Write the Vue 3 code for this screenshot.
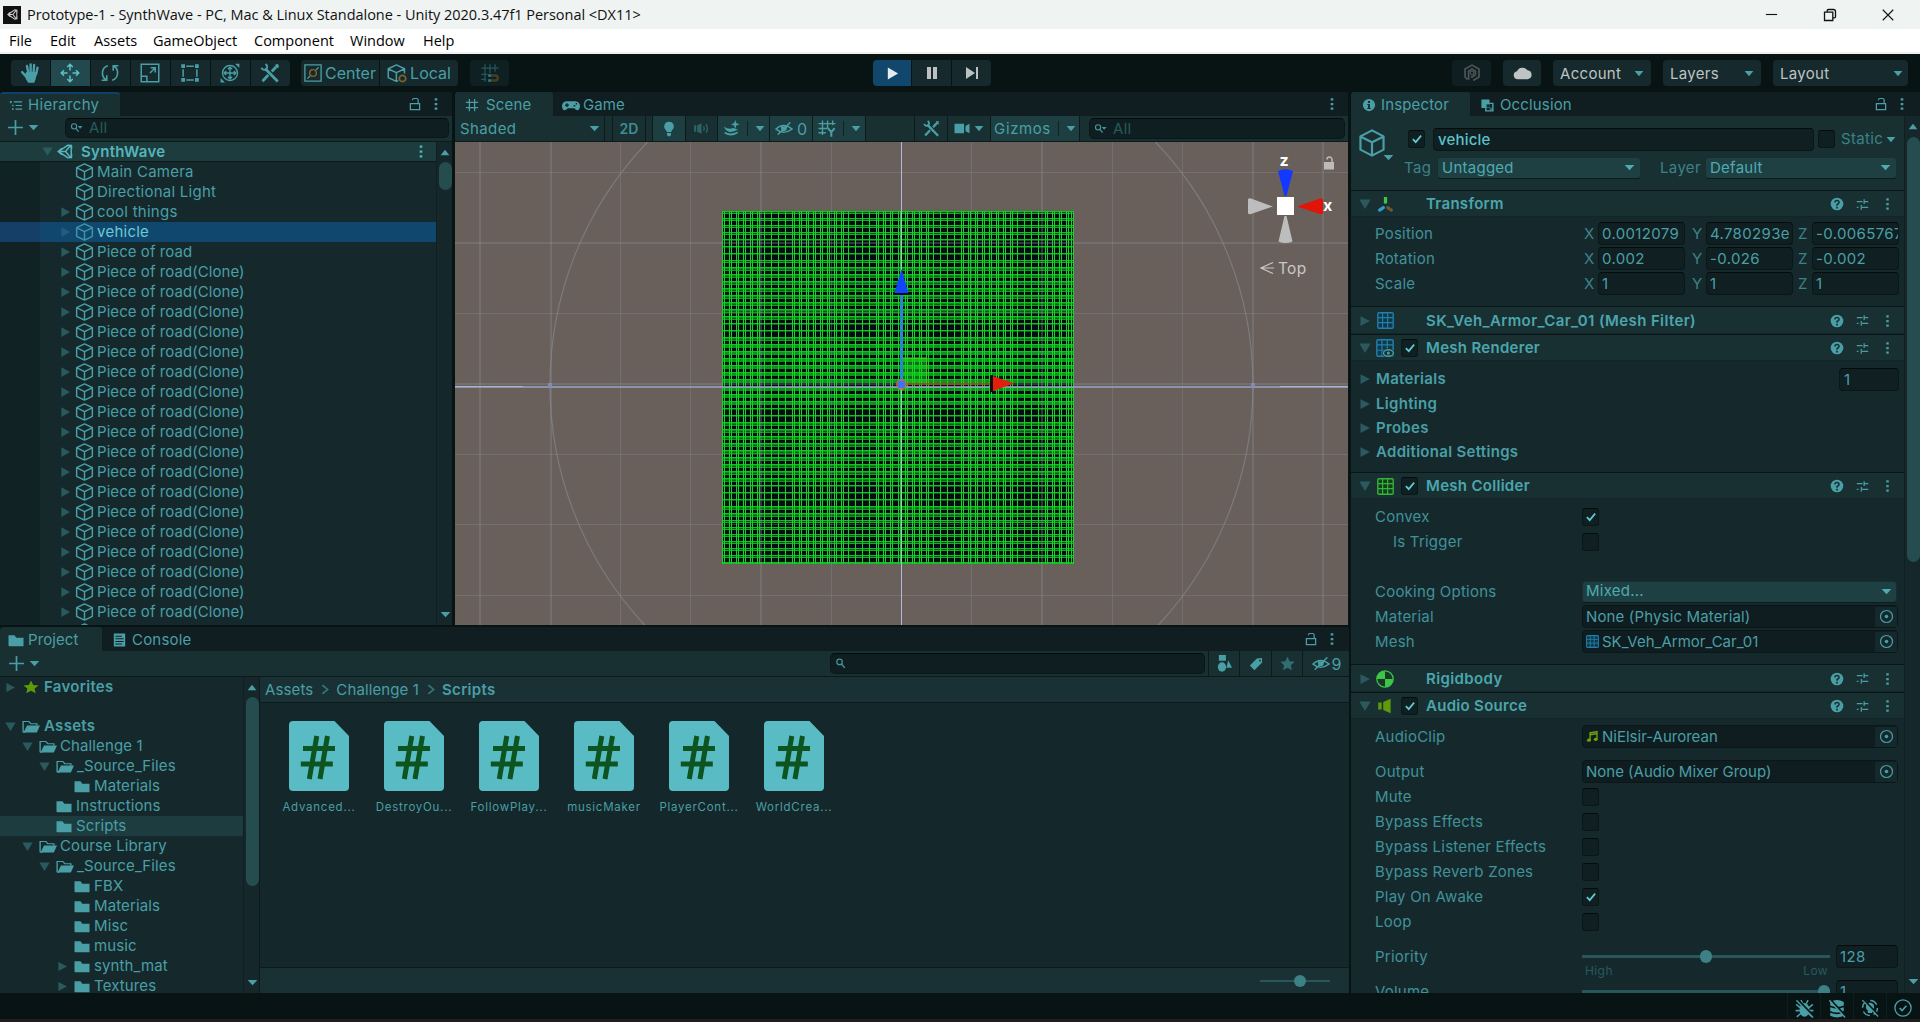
<script setup>
import { h } from 'vue'

const S = 'fill="none" stroke="currentColor"'
const F = 'fill="currentColor"'
const sheet = (c, f) => `<rect x="0.75" y="0.75" width="14.5" height="14.5" rx="1" fill="${f}" stroke="${c}" stroke-width="1.3"/><path d="M5.3 1V15M10 1V15M1 5.3H15M1 10H15" stroke="${c}" stroke-width="1.1"/>`
const slash = '<path d="M2.6 1.2L15.6 14.6" stroke="#0a1616" stroke-width="2"/><path d="M1.2 1L15.2 15.5" stroke="currentColor" stroke-width="1.2"/>'

const ICONS = {
  unity: `<path ${S} stroke-width="1.5" d="M11 1.2L1.6 8L11 14.8M1.6 8H8.6L13.4 1.6M8.6 8L13.4 14.4M14.2 2.2V13.8M5 4.6L1.2 8L5 11.4M10.5 1.2L14.4 1.6L14.6 5.5M10.5 14.8L14.4 14.4L14.6 10.5"/>`,
  hand: `<path ${S} stroke-width="1.9" stroke-linecap="round" d="M5.6 2.4L6.6 8M8.5 1.1V8M11.3 1.6L10.8 8M14 3.8L12.9 9M1.7 7.3L4.6 10.5"/><path ${F} d="M5 7.2H13.8L12.8 11.5Q12.3 14 11.4 15.8H6.6Q4.4 13.3 3.6 10Z"/>`,
  move: `<path ${S} stroke-width="1.2" d="M8 1.5V6M8 10V14.5M1.5 8H6M10 8H14.5M5.8 3.2L8 1L10.2 3.2M5.8 12.8L8 15L10.2 12.8M3.2 5.8L1 8L3.2 10.2M12.8 5.8L15 8L12.8 10.2"/>`,
  rotate: `<path ${S} stroke-width="1.3" d="M6.3 2.2C1 3.6 0.6 11 4.8 13.4M9.7 13.8C15 12.4 15.4 5 11.2 2.6M1.3 13.8H5.4V9.8M14.7 2.2H10.6V6.2"/>`,
  scale: `<path ${S} stroke-width="1.2" d="M1 1H15V15H1ZM1 10.5H5.5V15M8 8L12 4M8.5 3.8H12.2V7.5"/>`,
  rect: `<path ${S} stroke-width="1.2" d="M5 2.5H11M5 13.5H11M2.5 5V11M13.5 5V11"/><path ${F} d="M1 1H4V4H1ZM12 1H15V4H12ZM1 12H4V15H1ZM12 12H15V15H12Z"/>`,
  multi: `<circle cx="8" cy="8" r="6" ${S} stroke-width="1.1"/><path ${S} stroke-width="1.1" d="M8 3.5V12.5M3.5 8H12.5M6.3 5L8 3.3L9.7 5M6.3 11L8 12.7L9.7 11M5 6.3L3.3 8L5 9.7M11 6.3L12.7 8L11 9.7"/><path ${F} d="M12 0.5H15.5V4ZM0.5 12V15.5H4Z"/>`,
  tools: `<path ${S} stroke-width="2.2" d="M4 4.4L14.2 14.8M12.6 3.4L9.4 6.8M6.6 9.6L2 14.6"/><path ${S} stroke-width="1.5" d="M4.4 0.8Q6.8 2.8 5 5Q2.6 6.4 1 3.8M12.4 1.4L14.8 3.6M11.6 4.4L14.6 1.2"/>`,
  center: `<path ${S} stroke-width="1.2" d="M0.8 0.8H15.2V15.2H0.8ZM3 13L5.2 10.8M10.8 5.2L13 3"/><circle cx="8" cy="8" r="3" fill="none" stroke="#80642c" stroke-width="1.3"/>`,
  cube: `<path ${S} stroke-width="1.25" stroke-linejoin="round" d="M8 0.8L14.6 4.2V11.8L8 15.2L1.4 11.8V4.2ZM1.6 4.4L8 7.6L14.4 4.4M8 7.6V15"/>`,
  local: `<path ${S} stroke-width="1.2" stroke-linejoin="round" d="M9 14L7.5 14.6L1 11.5V4L7.5 0.8L14 4V8M1.2 4.2L7.5 7.2L13.8 4.2M7.5 7.2V14.4"/><circle cx="12.4" cy="12.2" r="2.6" fill="none" stroke="#80642c" stroke-width="1.4"/>`,
  snap: `<path ${S} stroke-width="1" d="M4 1V15M8 1V8M12 1V7M1 4H15M1 9H6M1 13H5"/><path fill="none" stroke="#4a3d1e" stroke-width="2" d="M9 10H12.2A2 2 0 0 1 12.2 14H9"/><path fill="#2f7a80" d="M6.5 9H9V11H6.5ZM6.5 13H9V15H6.5Z"/>`,
  play: `<path ${F} d="M3 1.5L14 8L3 14.5Z"/>`,
  pause: `<path ${F} d="M3 2H7V14H3ZM9 2H13V14H9Z"/>`,
  step: `<path ${F} d="M2 2L11 8L2 14ZM12 2H14V14H12Z"/>`,
  collab: `<path ${S} stroke-width="1.5" d="M4 13.6L1.8 11.5V4.5L8 1L14.2 4.5V11.5L9 14.6M5 14V6.5L8 4.4L11 6.5V9.6L8 11.5L7 11"/><circle cx="8" cy="8" r="1.6" ${S}/>`,
  cloud: `<path ${F} d="M4 13.5A3.6 3.6 0 0 1 3.4 6.4A5 5 0 0 1 12.2 5.6A4 4 0 0 1 12.4 13.5Z"/>`,
  list: `<path ${S} stroke-width="1.4" d="M5.5 3.5H15M7.5 8H15M7.5 12.5H15"/><path ${F} d="M1 2.5H3.2V4.7H1ZM3.5 7H5.2V9H3.5ZM3.5 11.5H5.2V13.5H3.5ZM1.7 4H2.5V5.5H1.7Z"/>`,
  lock: `<path ${S} stroke-width="1.4" d="M2.7 7.5H13.3V14.3H2.7ZM11.6 7.5V3.5Q11.6 1.7 9.8 1.7H6.8Q5 1.7 5 3.6"/>`,
  dots: `<path ${F} d="M6.5 1.5H9.5V4H6.5ZM6.5 6.8H9.5V9.3H6.5ZM6.5 12H9.5V14.5H6.5Z"/>`,
  grid: `<path ${S} stroke-width="1.4" d="M5 1V15M11 1V15M1 5H15M1 11H15"/>`,
  pad: `<path ${F} fill-rule="evenodd" d="M4 4H12Q15.8 4.6 16 8.4Q15.8 12.4 13.6 12.4Q12.2 12.2 11 10.5H5Q3.8 12.2 2.4 12.4Q0.2 12.4 0 8.4Q0.2 4.6 4 4ZM3.8 5.8V7H2.6V8.2H3.8V9.4H5V8.2H6.2V7H5V5.8ZM12.2 5.6V7H13.4V5.6ZM10.4 7.6V9H11.8V7.6Z"/>`,
  plus: `<path ${S} stroke-width="1.6" d="M8 1V15M1 8H15"/>`,
  down: `<path ${F} d="M1 4.5H15L8 12Z"/>`,
  up: `<path ${F} d="M1 12H15L8 4Z"/>`,
  tri: `<path ${F} d="M2 1.5L14.5 8L2 14.5Z"/>`,
  triD: `<path ${F} d="M0.5 2H15.5L8 14.5Z"/>`,
  find: `<circle cx="5.6" cy="6" r="3.4" ${S} stroke-width="1.5"/><path ${S} stroke-width="1.8" d="M8 8.6L12 13.4"/>`,
  findD: `<circle cx="5" cy="6.6" r="3.2" ${S} stroke-width="1.4"/><path ${S} stroke-width="1.6" d="M7.3 9L10.6 13"/><path ${F} d="M9.5 6H15.5L12.5 9.4Z"/>`,
  bulb: `<path ${F} d="M8 0.8A4.7 4.7 0 0 1 10.7 9.4L10.3 11H5.7L5.3 9.4A4.7 4.7 0 0 1 8 0.8ZM6 12H10V14L9 15.2H7L6 14Z"/>`,
  sound: `<path ${F} d="M1 5H3V11H1ZM4 5L8 3V13L4 11Z"/><path ${S} stroke-width="1.3" d="M10 5.8Q11 8 10 10.2M12.2 3.8Q14.8 8 12.2 12.2"/>`,
  fx: `<path ${F} d="M11.5 0L12.6 3L15.6 4.1L12.6 5.2L11.5 8.2L10.4 5.2L7.4 4.1L10.4 3ZM1 6Q3 8 7 8.2L9.6 7.6L14 9Q9 12 5.6 11Q2 9.6 1 6ZM1.5 11Q7 14.4 13.8 10.8V12.4Q7.4 16.6 1.5 12.6Z"/>`,
  eye: `<path ${S} stroke-width="1.4" d="M0.8 8.6Q7.5 0.6 15.2 8.6Q7.5 15.6 0.8 8.6Z"/><path ${F} d="M5 5.5H11L10 10L6 11.5Z"/><path ${S} stroke-width="1.5" d="M2.5 14.5L13.6 1.5"/>`,
  gridY: `<path ${S} stroke-width="1.2" d="M4 0.5V14M8.5 0.5V8M13 0.5V5M0.5 3.5H15.5M0.5 8H8M0.5 12H7"/><path ${S} stroke-width="1.8" d="M8.8 7.6L11.8 11.4L14.8 7.6M11.8 11V15.8"/>`,
  camera: `<path ${F} d="M0.5 3H10V13H0.5ZM15.5 3V13L11.5 10.8V5.2Z"/>`,
  info: `<path ${F} fill-rule="evenodd" d="M8 1A7 7 0 1 1 8 15A7 7 0 0 1 8 1ZM6.8 3.4V5.6H9.2V3.4ZM6 6.8V8H6.9V11.4H6V12.6H10V11.4H9.1V6.8Z"/>`,
  occl: `<path ${F} fill-rule="evenodd" d="M0.5 0.5H10.5V4.5H15.5V15.5H5V11H0.5ZM6.8 6.300V13.7H13.7V6.300Z"/><path ${F} d="M6.8 6.3H10.6V11H6.8ZM10.600 10.800H13.7V13.7H10.6Z" opacity=".6"/><path fill="#101e21" d="M7.600 7.200H10V9.800H7.600Z"/>`,
  help: `<circle cx="8" cy="8" r="7.2" ${F}/><path fill="none" stroke="#183033" stroke-width="1.7" d="M5.5 6.3Q5.7 3.9 8 3.9T10.4 6.2Q10.3 7.5 8 8.6V10"/><path fill="#183033" d="M7 11H9V13H7Z"/>`,
  sliders: `<path ${S} stroke-width="1.5" d="M1 4.5H8M10 4.5H15M10 1.5V7.5M1 11.5H3M7.5 11.5H15M6.5 8.5V14.5"/>`,
  pick: `<circle cx="8" cy="8" r="6.4" ${S} stroke-width="1.3"/><circle cx="8" cy="8" r="1.9" ${F}/>`,
  axes: `<path stroke="#3fc44a" stroke-width="3" d="M8 1V7"/><path stroke="#2f9ecb" stroke-width="3" stroke-linecap="round" d="M6 11L2.4 13.2"/><path stroke="#6e5530" stroke-width="3" stroke-linecap="round" d="M10 11L13.6 13.2"/>`,
  mesh: sheet('#1f7fae', '#123844'),
  renderer: sheet('#1f7fae', '#123844') + '<ellipse cx="11" cy="12.5" rx="5.5" ry="4" fill="#183033"/><ellipse cx="11" cy="12.5" rx="4.4" ry="2.9" fill="none" stroke="#4799a0" stroke-width="1.3"/><circle cx="11" cy="12.5" r="1.4" fill="#4799a0"/>',
  collider: sheet('#36b23a', '#12401f'),
  rigid: `<circle cx="8" cy="8" r="7.3" fill="#173a24" stroke="#3fc44a" stroke-width="1.1"/><path fill="#3fc44a" d="M8 8V0.8A7.2 7.2 0 0 0 0.8 8ZM8 8V15.2A7.2 7.2 0 0 0 15.2 8Z"/>`,
  audio: `<path fill="#5f9a08" d="M2 4.5H5V11.5H2ZM6.4 4L13 0.8V15.2L6.4 12Z"/>`,
  note: `<path fill="none" stroke="#6fa30a" stroke-width="1.7" d="M5 12.5V3.5L13.5 2V11M5 5.8L13.5 4.3"/><ellipse cx="3.6" cy="12.6" rx="2.4" ry="2" fill="#6fa30a"/><ellipse cx="12" cy="11.4" rx="2.4" ry="2" fill="#6fa30a"/>`,
  check: `<path ${S} stroke-width="2.2" d="M2.5 8.2L6.3 12.2L13.5 3.5"/>`,
  folder: `<path ${F} d="M0.5 2.5H6.5L8.3 5H15.5V14H1.5Q0.5 14 0.5 13Z"/>`,
  open: `<path ${S} stroke-width="1.2" d="M1 14V2.6H6L7.8 5H13.2V7M1 14H3"/><path ${F} d="M4.4 7H16L13.2 14.4H1.4Z"/>`,
  console: `<path ${F} fill-rule="evenodd" d="M1 0.5H15V15.5H1ZM3 3V4.2H11V3ZM3 6V7.2H13V6ZM3 9V10.2H13V9ZM3 12V13.2H11V12Z"/>`,
  star: `<path ${F} d="M8 0.6L10.2 5.6L15.6 6.2L11.6 9.8L12.7 15.2L8 12.4L3.3 15.2L4.4 9.8L0.4 6.2L5.8 5.6Z"/>`,
  shapes: `<path ${F} d="M2 0H9.5V5.5H2ZM12 5L16 12H10Z"/><circle cx="5.3" cy="11.3" r="4.4" ${F}/>`,
  tag: `<path ${F} fill-rule="evenodd" d="M9 1.6L14.8 1.2L15 6.2L6.2 15L1 9.6ZM11.6 3.2V5H13.4V3.2Z"/>`,
  chev: `<path ${S} stroke-width="2.4" d="M4.500 1.5L11.500 8L4.500 14.5"/>`,
  bug: `<ellipse cx="8" cy="9.2" rx="4.2" ry="5.8" ${F}/><path ${S} stroke-width="1.3" d="M5 1L6.5 4M11 1L9.5 4M1 4.5L4.5 7.5M15 4.5L11.5 7.5M0.5 9.8H4M12 9.8H15.5M1.5 15L5 12M14.5 15L11 12"/>` + slash,
  db: `<path ${F} d="M2 2.5Q8 -1 14 2.5V5.5Q8 8 2 5.5ZM2 7Q8 9.5 14 7V10Q8 12.6 2 10ZM2 11.6Q8 14 14 11.6V14Q8 17 2 14Z"/>` + slash,
  auto: `<circle cx="8" cy="8" r="6.6" ${S} stroke-width="1.3" stroke-dasharray="7 3.4"/><path ${F} d="M8 3.4A3.6 3.6 0 0 1 10 10V12.4H6V10A3.6 3.6 0 0 1 8 3.4Z"/>` + slash,
  ok: `<circle cx="8" cy="8" r="7.2" ${S} stroke-width="1.2"/><path ${S} stroke-width="1.5" d="M5 8L7.2 10.2L11 6"/>`,
  min: `<path ${S} stroke-width="1.2" d="M2 8H14"/>`,
  restore: `<path ${S} stroke-width="1.3" d="M2.5 5.2H10.8V13.5H2.5ZM5.2 5V3.6Q5.2 2.5 6.4 2.5H11.4Q13.5 2.5 13.5 4.6V9.6Q13.5 10.8 12.4 10.8H11"/>`,
  close: `<path ${S} stroke-width="1.3" d="M2 2L14 14M14 2L2 14"/>`,
  cs: `<path fill="#59bcc4" d="M4 0H45.5L60 15V66Q60 70 56 70H4Q0 70 0 66V4Q0 0 4 0Z"/><path fill="none" stroke="#0d5420" stroke-width="5" d="M27.8 15L20.3 58M38.5 15L31 58M14 27.5H46M11.8 43H43.8"/>`,
}

const Icon = (p) => h('svg', {
  viewBox: p.vb || '0 0 16 16',
  width: p.w || 16,
  height: p.h || p.w || 16,
  preserveAspectRatio: 'none',
  innerHTML: ICONS[p.n],
})
Icon.props = ['n', 'w', 'h', 'vb']

const menu = [['File', 41], ['Edit', 44], ['Assets', 59], ['GameObject', 101], ['Component', 96], ['Window', 73], ['Help', 50]]
const tools = ['hand', 'move', 'rotate', 'scale', 'rect', 'multi', 'tools']

const hierarchy = [
  { t: 'Main Camera' }, { t: 'Directional Light' },
  { t: 'cool things', a: 1 }, { t: 'vehicle', a: 1, sel: 1 }, { t: 'Piece of road', a: 1, tight: 1 },
  ...Array.from({ length: 18 }, () => ({ t: 'Piece of road(Clone)', a: 1, tight: 1 })),
]

const tree = [
  { t: 'Favorites', a: 'tri', i: 'star', x: 4, g: 2, b: 1, gap: 19 },
  { t: 'Assets', a: 'triD', i: 'open', x: 4, g: 1, b: 1 },
  { t: 'Challenge 1', a: 'triD', i: 'open', x: 21 },
  { t: '_Source_Files', a: 'triD', i: 'open', x: 38 },
  { t: 'Materials', i: 'folder', x: 56 },
  { t: 'Instructions', i: 'folder', x: 38 },
  { t: 'Scripts', i: 'folder', x: 38, sel: 1 },
  { t: 'Course Library', a: 'triD', i: 'open', x: 21 },
  { t: '_Source_Files', a: 'triD', i: 'open', x: 38 },
  { t: 'FBX', i: 'folder', x: 56 },
  { t: 'Materials', i: 'folder', x: 56 },
  { t: 'Misc', i: 'folder', x: 56 },
  { t: 'music', i: 'folder', x: 56 },
  { t: 'synth_mat', a: 'tri', i: 'folder', x: 56 },
  { t: 'Textures', a: 'tri', i: 'folder', x: 56 },
]

const files = ['Advanced...', 'DestroyOu...', 'FollowPlay...', 'musicMaker', 'PlayerCont...', 'WorldCrea...']

const transform = [
  ['Position', '0.0012079', '4.780293e', '-0.0065767'],
  ['Rotation', '0.002', '-0.026', '-0.002'],
  ['Scale', '1', '1', '1'],
]
const foldouts = ['Materials', 'Lighting', 'Probes', 'Additional Settings']
const audioFlags = [['Mute', 0], ['Bypass Effects', 0], ['Bypass Listener Effects', 0], ['Bypass Reverb Zones', 0], ['Play On Awake', 1], ['Loop', 0]]

// Scene canvas, in pixels from the viewport's top-left corner
const vLines = [[24, 2], [95, 2], [165, 1], [235, 1], [305, 2], [376, 1], [516, 1], [586, 2], [657, 1], [727, 1], [797, 2], [867, 2]]
const hLines = [[30, 1], [100, 2], [171, 1], [312, 1], [382, 1], [453, 1]]

const vMesh = []
const hMesh = []
for (let k = 0; k <= 50; k++) {
  const p = Math.round(k * 7.02)
  vMesh.push(p)
  const m = k % 12
  if ((m < 6 || m > 9) && p + 2 < 352) vMesh.push(p + 2)
  const single = (p > 24 && p < 45) || (p > 108 && p < 125) || (p > 190 && p < 210) || (p > 270 && p < 295)
  hMesh.push({ y: p, h: 1, o: 1 })
  if (k === 50) continue
  if (single) hMesh.push({ y: p + 1, h: 1, o: 0.45 })
  else if (Math.abs(p - 160) < 34) hMesh.push({ y: p + 1, h: 3, o: 0.75 })
  else if (Math.abs(p - 180) < 125) hMesh.push({ y: p + 1, h: 1, o: 0.7 }, { y: p + 2, h: 1, o: 0.45 }, { y: p + 3, h: 1, o: 0.8 })
  else hMesh.push({ y: p + 1, h: 1, o: 0.4 }, { y: p + 2, h: 1, o: 0.9 })
}
hMesh.push({ y: 352, h: 1, o: 1 })
vMesh.push(349)
</script>

<template>
  <div class="window">
    <header class="title">
      <span class="logo"><Icon n="unity" w="11" h="11" /></span>
      <span class="title-text">Prototype-1 - SynthWave - PC, Mac &amp; Linux Standalone - Unity 2020.3.47f1 Personal &lt;DX11&gt;</span>
      <div class="controls"><Icon n="min" w="15" /><Icon n="restore" w="16" /><Icon n="close" w="14" /></div>
    </header>
    <nav class="menu"><span v-for="m in menu" :key="m[0]" :style="{ width: m[1] + 'px' }">{{ m[0] }}</span></nav>

    <div class="toolbar">
      <div class="group tools">
        <span v-for="t in tools" :key="t" class="btn" :class="{ on: t === 'move' }"><Icon :n="t" w="20" /></span>
      </div>
      <div class="group pivot">
        <span class="btn"><Icon n="center" w="18" h="18" />Center</span>
        <span class="btn"><Icon n="local" w="20" h="19" />Local</span>
      </div>
      <span class="btn snap"><Icon n="snap" w="20" /></span>
      <div class="group player">
        <span class="btn live"><Icon n="play" w="15" /></span>
        <span class="btn"><Icon n="pause" w="16" /></span>
        <span class="btn"><Icon n="step" w="16" /></span>
      </div>
      <div class="right">
        <span class="btn dim"><Icon n="collab" w="18" /></span>
        <span class="btn cloud"><Icon n="cloud" w="19" h="18" /></span>
        <span class="btn drop">Account<Icon n="down" w="10" h="11" /></span>
        <span class="btn drop">Layers<Icon n="down" w="10" h="11" /></span>
        <span class="btn drop wide">Layout<Icon n="down" w="10" h="11" /></span>
      </div>
    </div>

    <main class="docks">
      <div class="left">
        <div class="upper">
          <section class="panel hierarchy">
            <div class="tabs">
              <span class="tab active focus"><Icon n="list" w="14" h="13" />Hierarchy</span>
              <span class="tab-tools"><Icon n="lock" w="14" /><Icon n="dots" w="14" h="14" /></span>
            </div>
            <div class="bar">
              <Icon class="plus" n="plus" w="17" /><Icon n="down" w="11" h="11" />
              <span class="search"><Icon n="findD" w="13" h="13" />All</span>
            </div>
            <div class="h-body">
              <div class="h-list">
                <div class="h-root"><Icon class="fade" n="triD" w="11" h="11" /><Icon n="unity" w="16" h="15" /><b>SynthWave</b><Icon class="end" n="dots" w="14" h="15" /></div>
                <div v-for="(r, k) in hierarchy" :key="k" class="h-row" :class="{ sel: r.sel, tight: r.tight }">
                  <span class="arrow"><Icon v-if="r.a" class="fade" n="tri" w="11" h="12" /></span>
                  <Icon n="cube" w="19" h="18" />{{ r.t }}
                </div>
                <div class="h-row"><span class="arrow"></span><Icon n="cube" w="19" h="18" /></div>
              </div>
              <div class="scroll"><Icon n="up" w="10" h="11" /><i class="thumb short"></i><Icon class="bottom" n="down" w="11" h="11" /></div>
            </div>
          </section>

          <section class="panel scene">
            <div class="tabs">
              <span class="tab active"><Icon n="grid" w="14" h="14" />Scene</span>
              <span class="tab"><Icon n="pad" w="18" h="17" />Game</span>
              <span class="tab-tools"><Icon n="dots" w="14" h="14" /></span>
            </div>
            <div class="sbar">
              <span class="cell shaded">Shaded<Icon n="down" w="11" h="11" /></span>
              <span class="cell gap8"></span>
              <span class="cell twod">2D</span>
              <span class="cell gap7"></span>
              <span class="cell lit c32"><Icon n="bulb" w="16" /></span>
              <span class="cell c32 faint"><Icon n="sound" w="17" /></span>
              <span class="cell lit c52"><Icon n="fx" w="17" /><i></i><Icon n="down" w="10" h="11" /></span>
              <span class="cell lit c43"><Icon n="eye" w="18" h="15" />0</span>
              <span class="cell lit c53"><Icon n="gridY" w="18" h="17" /><i></i><Icon n="down" w="10" h="11" /></span>
              <span class="cell fill"></span>
              <span class="cell c33"><Icon n="tools" w="17" /></span>
              <span class="cell c43"><Icon n="camera" w="16" h="15" /><Icon n="down" w="10" h="11" /></span>
              <span class="cell lit giz">Gizmos<i></i><Icon n="down" w="10" h="11" /></span>
              <span class="search"><Icon n="findD" w="13" h="13" />All</span>
            </div>
            <svg class="view" width="893" height="483" viewBox="0 0 893 483">
              <rect width="893" height="483" fill="#69605b" />
              <g shape-rendering="crispEdges">
                <rect x="267" y="69" width="352" height="353" fill="#0a0a16" />
              </g>
              <g shape-rendering="crispEdges" transform="translate(267 69)">
                <rect v-for="(l, k) in hMesh" :key="k" x="0" :y="l.y" width="352" :height="l.h" fill="#0fc01f" :opacity="l.o" />
                <rect v-for="x in vMesh" :key="x" :x="x" y="0" width="1" height="353" fill="#10d924" />
              </g>
              <g fill="#8c9094" fill-opacity="0.32" shape-rendering="crispEdges">
                <rect v-for="l in vLines" :key="l[0]" :x="l[0]" y="0" :width="l[1]" height="483" />
                <rect v-for="l in hLines" :key="l[0]" x="0" :y="l[0]" width="893" :height="l[1]" />
                <rect x="0" y="241" width="893" height="2" />
              </g>
              <circle cx="446.5" cy="243" r="351.5" fill="none" stroke="#85888f" stroke-opacity="0.7" stroke-width="1.2" />
              <g shape-rendering="crispEdges">
                <rect x="0" y="244" width="893" height="2" fill="#8f9dbd" fill-opacity="0.85" />
                <rect x="0" y="244" width="68" height="1" fill="#a9b4cf" />
                <rect x="825" y="244" width="68" height="1" fill="#a9b4cf" />
                <rect x="446" y="0" width="1" height="483" fill="#b3b9d6" />
                <rect x="93" y="241" width="4" height="4" fill="#7f8bb0" />
                <rect x="796" y="241" width="4" height="4" fill="#7f8bb0" />
                <rect x="448" y="215" width="24" height="26" fill="#17d320" fill-opacity="0.5" />
                <path d="M448 216H471V241" fill="none" stroke="#46cf10" />
                <rect x="445" y="151" width="3" height="90" fill="#2c86cf" />
                <rect x="448" y="241" width="89" height="2" fill="#a4521c" fill-opacity="0.8" />
              </g>
              <path d="M446.5 127L453.500 151H439.500Z" fill="#1443ff" /><path d="M439 151H454L453 153H440Z" fill="#06081c" />
              <path d="M535 233H538V250H535Z" fill="#140808" /><path d="M538 234L559 241.5L538 249Z" fill="#e0200c" />
              <circle cx="446.5" cy="242.5" r="5.5" fill="#c96c55" opacity="0.75" /><rect x="443" y="239" width="7" height="7" fill="#4270f0" />

              <path d="M823 29Q830.5 25.500 838 29L831.5 54H829.5Z" fill="#1338ff" />
              <path d="M823.500 99.500Q830.500 102.500 837.500 99.500L831.500 74H829.500Z" fill="#bdbdbd" />
              <path d="M793 57Q794.500 56 796 56.500L818 64.500L796 72Q794.500 72.500 793 71.500Z" fill="#bdbdbd" />
              <path d="M868 57Q866.500 56 865 56.500L842 64.500L865 72Q866.500 72.500 868 71.500Z" fill="#e01507" />
              <rect x="822" y="55" width="17" height="18" fill="#fff" />
              <text x="824.5" y="23.500" class="axis">z</text>
              <text x="868" y="69" class="axis">x</text>
              <path d="M818 120.5L806 126L818 131.5M819 126H806" fill="none" stroke="#c9c7c5" stroke-width="1.2" />
              <text x="823" y="131.5" class="top">Top</text>
              <path d="M869 20H879V27.500H869Z" fill="#bdbab8" /><path d="M877 20V17.500A2.500 2.500 0 0 0 872 17.500" fill="none" stroke="#bdbab8" stroke-width="1.5" />
            </svg>
          </section>
        </div>

        <section class="panel project">
          <div class="tabs">
            <span class="tab active"><Icon n="folder" w="16" h="15" />Project</span>
            <span class="tab"><Icon n="console" w="13" h="14" />Console</span>
            <span class="tab-tools"><Icon n="lock" w="14" /><Icon n="dots" w="14" h="14" /></span>
          </div>
          <div class="pbar">
            <Icon class="plus" n="plus" w="17" /><Icon n="down" w="11" h="11" />
            <span class="search"><Icon n="find" w="13" h="13" /></span>
            <span class="pcell"><Icon n="shapes" w="15" h="17" /></span>
            <span class="pcell"><Icon n="tag" w="14" h="14" /></span>
            <span class="pcell fainter"><Icon n="star" w="15" h="15" /></span>
            <span class="pcell last"><Icon n="eye" w="18" h="15" />9</span>
          </div>
          <div class="p-body">
            <div class="p-tree">
              <div v-for="(r, k) in tree" :key="k" class="p-row" :class="{ sel: r.sel, bold: r.b }" :style="{ paddingLeft: r.x + 'px', marginBottom: (r.gap || 0) + 'px' }">
                <span class="parrow"><Icon v-if="r.a" class="fade" :n="r.a" w="11" h="11" /></span>
                <span class="pico" :class="[r.i]" :style="{ marginRight: (r.g || 0) + 'px' }"><Icon :n="r.i" :w="r.i === 'open' ? 18 : 16" :h="r.i === 'star' ? 14 : 15" /></span>{{ r.t }}
              </div>
            </div>
            <div class="scroll"><Icon n="up" w="10" h="11" /><i class="thumb long"></i><Icon class="bottom" n="down" w="11" h="11" /></div>
            <div class="p-main">
              <div class="crumbs">Assets<Icon n="chev" w="12" h="11" />Challenge 1<Icon n="chev" w="12" h="11" /><b>Scripts</b></div>
              <div class="files">
                <div v-for="f in files" :key="f" class="file"><Icon n="cs" w="60" h="70" vb="0 0 60 70" /><span>{{ f }}</span></div>
              </div>
              <div class="p-foot"><span class="zoomer"><i></i></span></div>
            </div>
          </div>
        </section>
      </div>

      <section class="panel inspector">
        <div class="tabs">
          <span class="tab active"><Icon n="info" w="14" h="14" />Inspector</span>
          <span class="tab"><Icon n="occl" w="13" h="13" />Occlusion</span>
          <span class="tab-tools"><Icon n="lock" w="14" /><Icon n="dots" w="14" h="14" /></span>
        </div>
        <div class="i-wrap">
          <div class="i-body">
            <div class="obj">
              <div class="obj-icon"><Icon n="cube" w="28" h="28" /><Icon class="mini" n="down" w="11" h="11" /></div>
              <div class="obj-main">
                <div class="obj-line"><span class="box"><Icon n="check" w="12" h="12" /></span><span class="name">vehicle</span><span class="box"></span><span class="static">Static</span><Icon n="down" w="10" h="11" /></div>
                <div class="obj-line two"><span class="tag">Tag</span><span class="popup p1">Untagged<Icon n="down" w="11" h="11" /></span><span class="layer">Layer</span><span class="popup p2">Default<Icon n="down" w="11" h="11" /></span></div>
              </div>
            </div>

            <div class="comp"><Icon class="fade" n="triD" w="11" h="11" /><span class="cico"><Icon n="axes" w="17" h="17" /></span><span class="cbox"></span><b>Transform</b><span class="ctools"><Icon n="help" w="14" h="14" /><Icon n="sliders" w="13" h="13" /><Icon n="dots" w="13" h="14" /></span></div>
            <div class="props t">
              <div v-for="r in transform" :key="r[0]" class="row">
                <label>{{ r[0] }}</label>
                <em>X</em><span class="num">{{ r[1] }}</span><em>Y</em><span class="num">{{ r[2] }}</span><em class="z">Z</em><span class="num">{{ r[3] }}</span>
              </div>
            </div>

            <div class="comp folded"><Icon class="fade" n="tri" w="12" h="12" /><span class="cico"><Icon n="mesh" w="17" h="17" /></span><span class="cbox"></span><b>SK_Veh_Armor_Car_01 (Mesh Filter)</b><span class="ctools"><Icon n="help" w="14" h="14" /><Icon n="sliders" w="13" h="13" /><Icon n="dots" w="13" h="14" /></span></div>

            <div class="comp"><Icon class="fade" n="triD" w="11" h="11" /><span class="cico"><Icon n="renderer" w="18" h="18" /></span><span class="cbox"><span class="box"><Icon n="check" w="12" h="12" /></span></span><b>Mesh Renderer</b><span class="ctools"><Icon n="help" w="14" h="14" /><Icon n="sliders" w="13" h="13" /><Icon n="dots" w="13" h="14" /></span></div>
            <div class="props r">
              <div v-for="(f, k) in foldouts" :key="f" class="fold"><Icon class="fade" n="tri" w="12" h="12" /><b>{{ f }}</b><span v-if="k === 0" class="num count">1</span></div>
            </div>

            <div class="comp"><Icon class="fade" n="triD" w="11" h="11" /><span class="cico"><Icon n="collider" w="17" h="17" /></span><span class="cbox"><span class="box"><Icon n="check" w="12" h="12" /></span></span><b>Mesh Collider</b><span class="ctools"><Icon n="help" w="14" h="14" /><Icon n="sliders" w="13" h="13" /><Icon n="dots" w="13" h="14" /></span></div>
            <div class="props c">
              <div class="row"><label>Convex</label><span class="box"><Icon n="check" w="12" h="12" /></span></div>
              <div class="row"><label class="sub">Is Trigger</label><span class="box"></span></div>
              <div class="row"></div>
              <div class="row"><label>Cooking Options</label><span class="popup full">Mixed...<Icon n="down" w="11" h="11" /></span></div>
              <div class="row"><label>Material</label><span class="objf">None (Physic Material)<span class="pick"><Icon n="pick" w="15" h="15" /></span></span></div>
              <div class="row"><label>Mesh</label><span class="objf"><Icon class="lead" n="mesh" w="13" h="13" /><span class="snug">SK_Veh_Armor_Car_01</span><span class="pick"><Icon n="pick" w="15" h="15" /></span></span></div>
            </div>

            <div class="comp folded"><Icon class="fade" n="tri" w="12" h="12" /><span class="cico"><Icon n="rigid" w="18" h="18" /></span><span class="cbox"></span><b>Rigidbody</b><span class="ctools"><Icon n="help" w="14" h="14" /><Icon n="sliders" w="13" h="13" /><Icon n="dots" w="13" h="14" /></span></div>

            <div class="comp"><Icon class="fade" n="triD" w="11" h="11" /><span class="cico"><Icon n="audio" w="18" h="16" /></span><span class="cbox"><span class="box"><Icon n="check" w="12" h="12" /></span></span><b>Audio Source</b><span class="ctools"><Icon n="help" w="14" h="14" /><Icon n="sliders" w="13" h="13" /><Icon n="dots" w="13" h="14" /></span></div>
            <div class="props a">
              <div class="row spaced"><label>AudioClip</label><span class="objf"><Icon class="lead" n="note" w="13" h="13" /><span class="snug">NiElsir-Aurorean</span><span class="pick"><Icon n="pick" w="15" h="15" /></span></span></div>
              <div class="row"><label>Output</label><span class="objf"><span class="snug">None (Audio Mixer Group)</span><span class="pick"><Icon n="pick" w="15" h="15" /></span></span></div>
              <div v-for="f in audioFlags" :key="f[0]" class="row"><label>{{ f[0] }}</label><span class="box"><Icon v-if="f[1]" n="check" w="12" h="12" /></span></div>
              <div class="row pri"><label>Priority</label><span class="slider"><i style="left: 50%"></i><small>High</small><small class="lo">Low</small></span><span class="num sv">128</span></div>
              <div class="row"><label>Volume</label><span class="slider"><i style="left: 97.5%"></i></span><span class="num sv">1</span></div>
            </div>
          </div>
          <div class="scroll"><Icon n="up" w="10" h="11" /><i class="thumb insp"></i><Icon class="bottom" n="down" w="11" h="11" /></div>
        </div>
      </section>
    </main>

    <footer class="status">
      <span><Icon n="bug" w="19" h="19" /></span><span><Icon n="db" w="18" h="19" /></span><span><Icon n="auto" w="18" h="18" /></span><span><Icon n="ok" w="18" h="18" /></span>
    </footer>
  </div>
</template>

<style>
body { margin: 0; background: #211d1e; overflow: hidden; }
</style>

<style scoped>
* { box-sizing: border-box; }
svg { display: block; flex: none; }
.window { width: 1920px; height: 1022px; display: flex; flex-direction: column; background: #081413; color: #4a9fa6; font: 15px/20px Inter, "Liberation Sans", sans-serif; overflow: hidden; white-space: nowrap; border-bottom: 3px solid #211d1e; }
.title { height: 29px; flex: none; display: flex; align-items: center; padding-left: 3px; background: #eff3f1; color: #111; font: 14.5px/20px "Open Sans", "Noto Sans", sans-serif; letter-spacing: -.03px; }
.logo { width: 18px; height: 18px; background: #111; color: #ccc; display: flex; align-items: center; justify-content: center; margin-right: 6px; }
.controls { margin-left: auto; display: flex; align-items: center; gap: 43px; padding-right: 25px; }
.menu { height: 25px; flex: none; display: flex; align-items: center; padding-left: 9px; background: #fff; border-bottom: 2px solid #f0f0f0; color: #000; font: 14.5px/20px "Open Sans", "Noto Sans", sans-serif; }
.menu span { flex: none; padding-top: 1px; }

.toolbar { height: 38px; flex: none; display: flex; align-items: flex-start; padding: 6px 12px 0 11px; }
.group { display: flex; gap: 1px; }
.btn { height: 26px; background: #16292c; display: flex; align-items: center; justify-content: center; }
.group .btn:first-child { border-radius: 4px 0 0 4px; }
.group .btn:last-child { border-radius: 0 4px 4px 0; }
.tools .btn { width: 39px; padding-right: 1px; }
.tools .btn.on { background: #22494d; color: #5cc2ca; }
.pivot { margin-left: 11px; font-size: 16px; }
.pivot .btn { width: 78px; gap: 3px; }
.snap { width: 39px; margin-left: 12px; border-radius: 4px; background: #0f2022; color: #25555a; }
.player { margin-left: 364px; color: #bcc0c0; }
.player .btn { width: 39px; }
.player .live { background: #11466d; color: #e6ebef; width: 38px; }
.right { margin-left: auto; display: flex; gap: 12px; }
.right .btn { border-radius: 4px; color: #bec3c3; }
.right .dim { width: 39px; color: #4b5555; background: #0f1f21; }
.right .cloud { width: 38px; }
.drop { width: 98px; justify-content: space-between !important; padding: 1px 7px 0; letter-spacing: .3px; }
.drop svg { color: #4a9fa6; }
.drop.wide { width: 135px; padding-right: 5px; }

.docks { display: flex; height: 901px; flex: none; gap: 2px; }
.left { width: 1349px; display: flex; flex-direction: column; gap: 2px; }
.upper { display: flex; height: 533px; gap: 3px; }
.panel { display: flex; flex-direction: column; background: #15292c; overflow: hidden; border-radius: 3px 3px 0 0; }
.hierarchy { width: 452px; }
.scene { width: 893px; }
.project { height: 366px; }
.inspector { width: 569px; }

.tabs { height: 24px; flex: none; display: flex; background: #101e21; letter-spacing: .3px; }
.tab { display: flex; align-items: center; padding: 2px 10px 0; gap: 6px; font-size: 15px; }
.tab.active { background: #193032; border-radius: 3px 3px 0 0; }
.tab.focus { border-top: 2px solid #0f416b; padding-top: 0; width: 120px; gap: 5px; padding-left: 9px; }
.tab-tools { margin-left: auto; display: flex; align-items: center; gap: 7px; padding-right: 9px; }
.scene .tab.active { width: 98px; gap: 7px; padding-left: 10px; letter-spacing: .15px; }
.scene .tab { gap: 3px; padding-left: 9px; letter-spacing: .1px; }
.project .tab.active { width: 102px; gap: 4px; padding-left: 8px; letter-spacing: .1px; }
.project .tab { padding-left: 11px; gap: 6px; letter-spacing: .2px; }
.inspector .tab.active { width: 119px; padding-left: 11px; gap: 5px; }
.inspector .tab { padding-left: 11px; gap: 6px; letter-spacing: .15px; }
.inspector .tab-tools { padding-right: 11px; }
.scene .tab-tools { padding-right: 9px; }
.project .tab-tools { padding-right: 10px; }

.bar { height: 26px; flex: none; background: #193032; display: flex; align-items: center; padding: 0 3px 2px 7px; border-bottom: 1px solid #0c1a1b; gap: 4px; }
.search { background: #0f1f21; border: 1px solid #0a1718; border-top: 1px solid #050b0b; border-radius: 5px; height: 20px; display: flex; align-items: center; color: #265a5e; gap: 6px; padding-left: 4px; letter-spacing: .3px; }
.search svg { color: #44949a; }
.bar .search { width: 384px; margin-left: auto; }

.h-body { display: flex; flex: 1; min-height: 0; }
.h-list { width: 436px; overflow: hidden; background: linear-gradient(90deg, #112225 40px, #15292c 40px); }
.h-root { height: 20px; background: #1d3c3e; border-bottom: 1px solid #0c1a1b; display: flex; align-items: center; padding-left: 42px; gap: 4px; color: #56b4bc; }
.h-root b { margin-left: 4px; }
.h-root .end { margin-left: auto; margin-right: 8px; }
.fade { color: #2a5a5e; }
b { font-weight: 600; letter-spacing: .3px; }
.h-row { height: 20px; display: flex; align-items: center; padding-left: 60px; letter-spacing: .25px; }
.h-row.tight { letter-spacing: .06px; }
.h-row .arrow { width: 15px; }
.h-row svg { margin-right: 3px; }
.h-row.sel { background: linear-gradient(90deg, #163f68 40px, #10476e 40px); color: #6acbd3; }
.h-row.sel svg { color: #3f93a6; }
.h-row.sel .fade { color: #235d7d; }
.scroll { width: 16px; flex: none; background: #15272a; border-left: 1px solid #102022; display: flex; flex-direction: column; align-items: center; padding: 5px 0 5px 1px; }
.thumb { width: 13px; border-radius: 7px; background: #254d50; margin-top: 4px; }
.thumb.short { height: 28px; }
.thumb.long { height: 189px; }
.thumb.insp { height: 425px; margin-top: 5px; }
.scroll .bottom { margin-top: auto; }

.sbar { height: 26px; flex: none; display: flex; align-items: stretch; background: #193032; border-bottom: 1px solid #0c1a1b; }
.cell { display: flex; align-items: center; justify-content: center; border-right: 1px solid #0c1a1b; flex: none; }
.cell.lit { background: #1e3f42; }
.cell i { width: 1px; height: 15px; background: #0f2224; }
.shaded { width: 150px; justify-content: space-between; padding: 0 4px 0 5px; letter-spacing: .4px; }
.gap8 { width: 8px; } .gap7 { width: 7px; }
.twod { width: 33px; font-size: 14px; font-weight: 600; color: #3f8c92; }
.c32 { width: 32.5px; } .faint { color: #2c6469; }
.c52 { width: 52px; gap: 7px; } .c43 { width: 43px; gap: 4px; font-size: 16px; } .c53 { width: 53px; gap: 7px; }
.fill { width: 49px; } .c33 { width: 33px; }
.giz { width: 89px; gap: 7px; letter-spacing: .6px; }
.sbar .search { flex: 1; margin: 2px 3px 0 9px; height: 21px; }
.axis { font: 700 16px Inter, sans-serif; fill: #fff; }
.top { font: 15.5px Inter, sans-serif; fill: #c9c7c5; letter-spacing: .3px; }

.pbar { height: 26px; flex: none; background: #193032; display: flex; align-items: stretch; padding-left: 8px; gap: 4px; border-bottom: 1px solid #0c1a1b; }
.pbar > svg { align-self: center; margin-bottom: 1px; }
.pbar .search { width: 375px; margin: 2px 0 0 auto; height: 21px; }
.pcell { width: 33px; margin-left: -1.5px; margin-right: -1.5px; border-left: 1px solid #0c1a1b; display: flex; align-items: center; justify-content: center; }
.pcell + .pcell { margin-left: -4px; }
.pcell.last { width: 47px; gap: 2px; font-size: 16px; margin-right: 0; padding-left: 1px; }
.fainter { color: #316e73; }
.p-body { display: flex; flex: 1; min-height: 0; }
.p-tree { width: 243px; overflow: hidden; letter-spacing: .12px; }
.p-row { height: 20px; display: flex; align-items: center; }
.p-row.sel { background: #1d3c3f; }
.p-row.bold { font-weight: 600; letter-spacing: .3px; }
.parrow { width: 18px; display: flex; }
.parrow svg { margin-left: 1px; }
.pico { display: flex; width: 20px; }
.pico.open { width: 21px; }
.pico.star { color: #5c9c0a; padding-left: 1px; }
.p-main { flex: 1; background: #14272a; border-left: 1px solid #0c1a1b; display: flex; flex-direction: column; }
.crumbs { height: 26px; background: #193134; border-bottom: 1px solid #0c1a1b; display: flex; align-items: center; gap: 5.5px; padding-left: 5px; letter-spacing: .12px; }
.crumbs svg { color: #33757a; }
.files { flex: 1; display: flex; padding: 18px 0 0 11.5px; }
.file { width: 95px; display: flex; flex-direction: column; align-items: center; font-size: 11.5px; letter-spacing: .75px; gap: 6px; }
.p-foot { height: 26px; background: #193134; border-top: 1px solid #0c1a1b; display: flex; align-items: center; justify-content: flex-end; padding-right: 19px; }
.zoomer { width: 70px; height: 2px; background: #27575b; position: relative; }
.zoomer i { position: absolute; left: 34px; top: -5px; width: 12px; height: 12px; border-radius: 6px; background: #3d8187; }

.i-wrap { display: flex; flex: 1; min-height: 0; }
.i-body { width: 553px; overflow: hidden; letter-spacing: .35px; }
.i-wrap .scroll { padding-bottom: 6px; }
.obj { height: 74px; background: #193032; display: flex; padding-top: 11px; }
.obj-icon { width: 57px; padding: 2px 0 0 7px; position: relative; }
.mini { position: absolute; left: 32px; top: 25px; }
.obj-line { display: flex; align-items: center; height: 24px; }
.box { width: 17px; height: 18px; border-radius: 3px; border: 1px solid #0a1718; border-top-color: #050b0b; background: #101f21; color: #62ccd4; display: flex; align-items: center; justify-content: center; flex: none; }
.name { width: 381px; height: 23px; margin: 0 4px 0 8px; border-radius: 4px; border: 1px solid #0a1718; border-top-color: #050b0b; background: #101f21; color: #5cc2ca; padding: 1px 0 0 4px; font-weight: 500; letter-spacing: .2px; }
.static { margin: 0 3px 0 6px; color: #3b8288; }
.two { margin-top: 5px; }
.tag { width: 33px; margin-left: -4px; color: #3b8288; }
.layer { width: 45px; margin-left: 19px; color: #3b8288; }
.popup { height: 22px; border-radius: 4px; background: #1f4043; border: 1px solid #17302f; border-bottom-color: #0c1b1d; color: #4fabb2; display: flex; align-items: center; justify-content: space-between; padding: 0 6px 1px 4px; letter-spacing: .25px; }
.p1 { width: 204px; padding-right: 5px; } .p2 { width: 192px; padding-right: 5px; } .popup.full { width: 315px; padding-right: 4px; padding-left: 3px; }

.comp { height: 27px; background: #193032; border-top: 1px solid #091516; border-bottom: 1px solid #12252a; display: flex; align-items: center; padding: 1px 10px 0 8px; }
.comp.folded { height: 28px; }
.comp .fade { width: 12px; height: 12px; }
.cico { width: 18px; margin-left: 5px; margin-right: 1px; display: flex; justify-content: center; }
.cbox { width: 25px; margin: 0 0 0 6px; display: flex; }
.comp b { color: #4ba6ad; }
.comp.folded b { letter-spacing: .38px; }
.ctools { margin-left: auto; display: flex; align-items: center; gap: 12px; }
.props.t { height: 89px; padding-top: 4px; }
.props.r { height: 111px; padding-top: 5px; }
.props.c { height: 165px; padding-top: 5px; }
.props.a { padding-top: 5px; }
.row { height: 25px; display: flex; align-items: center; padding: 0 5px 0 24px; }
.row label { width: 207px; color: #41919a; flex: none; letter-spacing: .22px; }
.row label.sub { padding-left: 18px; }
.row em { font-style: normal; width: 14px; margin-left: 2px; color: #3b8288; }
.row em + .num + em { margin-left: 7px; }
.row em.z { margin-left: 5px !important; }
.num { width: 87px; height: 23px; border-radius: 4px; border: 1px solid #0a1718; border-top-color: #050b0b; background: #101f21; padding: 1px 2px 0 3px; overflow: hidden; flex: none; }
.fold { height: 24px; display: flex; align-items: center; padding: 0 5px 0 8px; gap: 5px; }
.fold:first-child { height: 26px; }
.num.count { width: 60px; margin-left: auto; padding-left: 4px; }
.objf { width: 316px; height: 23px; border-radius: 4px; border: 1px solid #0a1718; background: #0f1d20; display: flex; align-items: center; padding-left: 3px; letter-spacing: .15px; }
.snug { letter-spacing: 0; }
.lead { margin-right: 3px; }
.pick { margin-left: auto; width: 22px; height: 20px; background: #15282b; display: flex; align-items: center; justify-content: center; padding-left: 1px; }
.row.spaced { margin-bottom: 10px; }
.row.pri { margin: 10px 0; }
.slider { width: 248px; height: 3px; background: #27575b; position: relative; margin-right: 6px; }
.slider i { position: absolute; top: -5px; width: 12px; height: 13px; margin-left: -6px; border-radius: 7px; background: #3d8187; }
.slider small { position: absolute; left: 3px; top: 6px; font-size: 12px; color: #265a5e; letter-spacing: .4px; }
.slider small.lo { left: auto; right: 2px; }
.num.sv { width: 62px; }

.status { height: 26px; flex: none; display: flex; justify-content: flex-end; padding-right: 1px; box-shadow: 0 1px 0 #4a4848; }
.status span { width: 33px; border-left: 1px solid #0e1d1e; display: flex; align-items: center; justify-content: center; padding-top: 4px; }
</style>
